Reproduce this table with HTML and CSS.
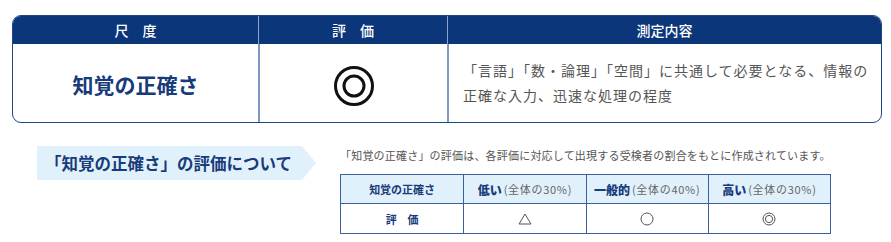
FILE: index.html
```html
<!DOCTYPE html>
<html lang="ja">
<head>
<meta charset="utf-8">
<link rel="stylesheet" href="styles.css">
</head>
<body>
<div class="scale">
  <div class="head">
    <div class="hc">尺　度</div>
    <div class="hc sep">評　価</div>
    <div class="hc sep">測定内容</div>
  </div>
  <div class="body">
    <div class="bc name">知覚の正確さ</div>
    <div class="bc sep mark">
      <svg width="42" height="42" viewBox="0 0 42 42"><circle cx="21" cy="21" r="18.5" fill="none" stroke="#111" stroke-width="3"/><circle cx="21" cy="21" r="10" fill="none" stroke="#111" stroke-width="3"/></svg>
    </div>
    <div class="bc sep desc">「言語」「数・論理」「空間」に共通して必要となる、情報の<br>正確な入力、迅速な処理の程度</div>
  </div>
</div>
<div class="lower">
  <div class="label">「知覚の正確さ」の評価について</div>
  <div class="info">
    <p class="note">「知覚の正確さ」の評価は、各評価に対応して出現する受検者の割合をもとに作成されています。</p>
    <div class="grid">
      <div class="th">知覚の正確さ</div>
      <div class="th"><b>低い</b><span class="pct">(全体の30%)</span></div>
      <div class="th"><b>一般的</b><span class="pct">(全体の40%)</span></div>
      <div class="th"><b>高い</b><span class="pct">(全体の30%)</span></div>
      <div class="td lab">評　価</div>
      <div class="td sym">
        <svg width="14" height="12" viewBox="0 0 14 12"><polygon points="7,1 13,11 1,11" fill="none" stroke="#555" stroke-width="1"/></svg>
      </div>
      <div class="td sym">
        <svg width="14" height="14" viewBox="0 0 14 14"><circle cx="7" cy="7" r="6" fill="none" stroke="#555" stroke-width="1"/></svg>
      </div>
      <div class="td sym">
        <svg width="14" height="14" viewBox="0 0 14 14"><circle cx="7" cy="7" r="6" fill="none" stroke="#555" stroke-width="1"/><circle cx="7" cy="7" r="3.6" fill="none" stroke="#555" stroke-width="1"/></svg>
      </div>
    </div>
  </div>
</div>
</body>
</html>
```
FILE: styles.css
```css
* { box-sizing: border-box; }
body {
  margin: 0;
  background: #fff;
  font-family: "Noto Sans CJK JP", "Noto Sans", sans-serif;
  color: #4a4a4a;
}
.scale {
  margin: 15px 0 0 12px;
  width: 870px;
  border: 1.5px solid #1f4587;
  border-radius: 9px;
  overflow: hidden;
}
.head, .body {
  display: grid;
  grid-template-columns: 245px 189px 1fr;
}
.head {
  background: #0b367a;
  height: 28px;
}
.hc {
  color: #fff;
  font-size: 14px;
  font-weight: 500;
  line-height: 28px;
  text-align: center;
}
.hc.sep { border-left: 1.5px solid #8ca4c9; }
.body { height: 78px; }
.bc { display: flex; align-items: center; }
.bc.sep { border-left: 2px solid #7f98c0; }
.name {
  justify-content: center;
  font-size: 21px;
  font-weight: 700;
  color: #183b7a;
  padding-top: 1px;
}
.mark { justify-content: center; padding-top: 5px; }
.desc {
  padding-left: 14px;
  font-size: 14px;
  line-height: 25px;
  letter-spacing: 1px;
  color: #555;
}
.lower {
  display: flex;
  margin-top: 23px;
  padding-left: 37px;
}
.label {
  width: 279px;
  height: 34px;
  background: #e1f1fb;
  clip-path: polygon(0 0, 265px 0, 279px 50%, 265px 100%, 0 100%);
  color: #183b7a;
  font-size: 16.5px;
  font-weight: 700;
  line-height: 34px;
  padding-left: 8px;
}
.info { margin-left: 24px; }
.note {
  margin: 0;
  font-size: 11px;
  line-height: 18px;
  letter-spacing: 0.2px;
  color: #555;
}
.grid {
  margin-top: 10px;
  width: 491px;
  display: grid;
  grid-template-columns: repeat(4, 1fr);
  grid-template-rows: 29px 29px;
  border: 1.5px solid #3d5f9e;
}
.th, .td {
  display: flex;
  align-items: center;
  justify-content: center;
  border-left: 1.5px solid #3d5f9e;
  font-size: 11px;
}
.th:nth-child(4n+1), .td:nth-child(4n+1) { border-left: 0; }
.th {
  background: #e1f1fb;
  border-bottom: 1.5px solid #3d5f9e;
  color: #183b7a;
  font-weight: 700;
}
.th b { font-size: 12px; color: #183b7a; margin-right: 2px; }
.pct { font-weight: 400; color: #666; font-size: 11px; letter-spacing: 0.7px; }
.lab { color: #183b7a; font-weight: 700; }
.sym svg { display: block; }
```
